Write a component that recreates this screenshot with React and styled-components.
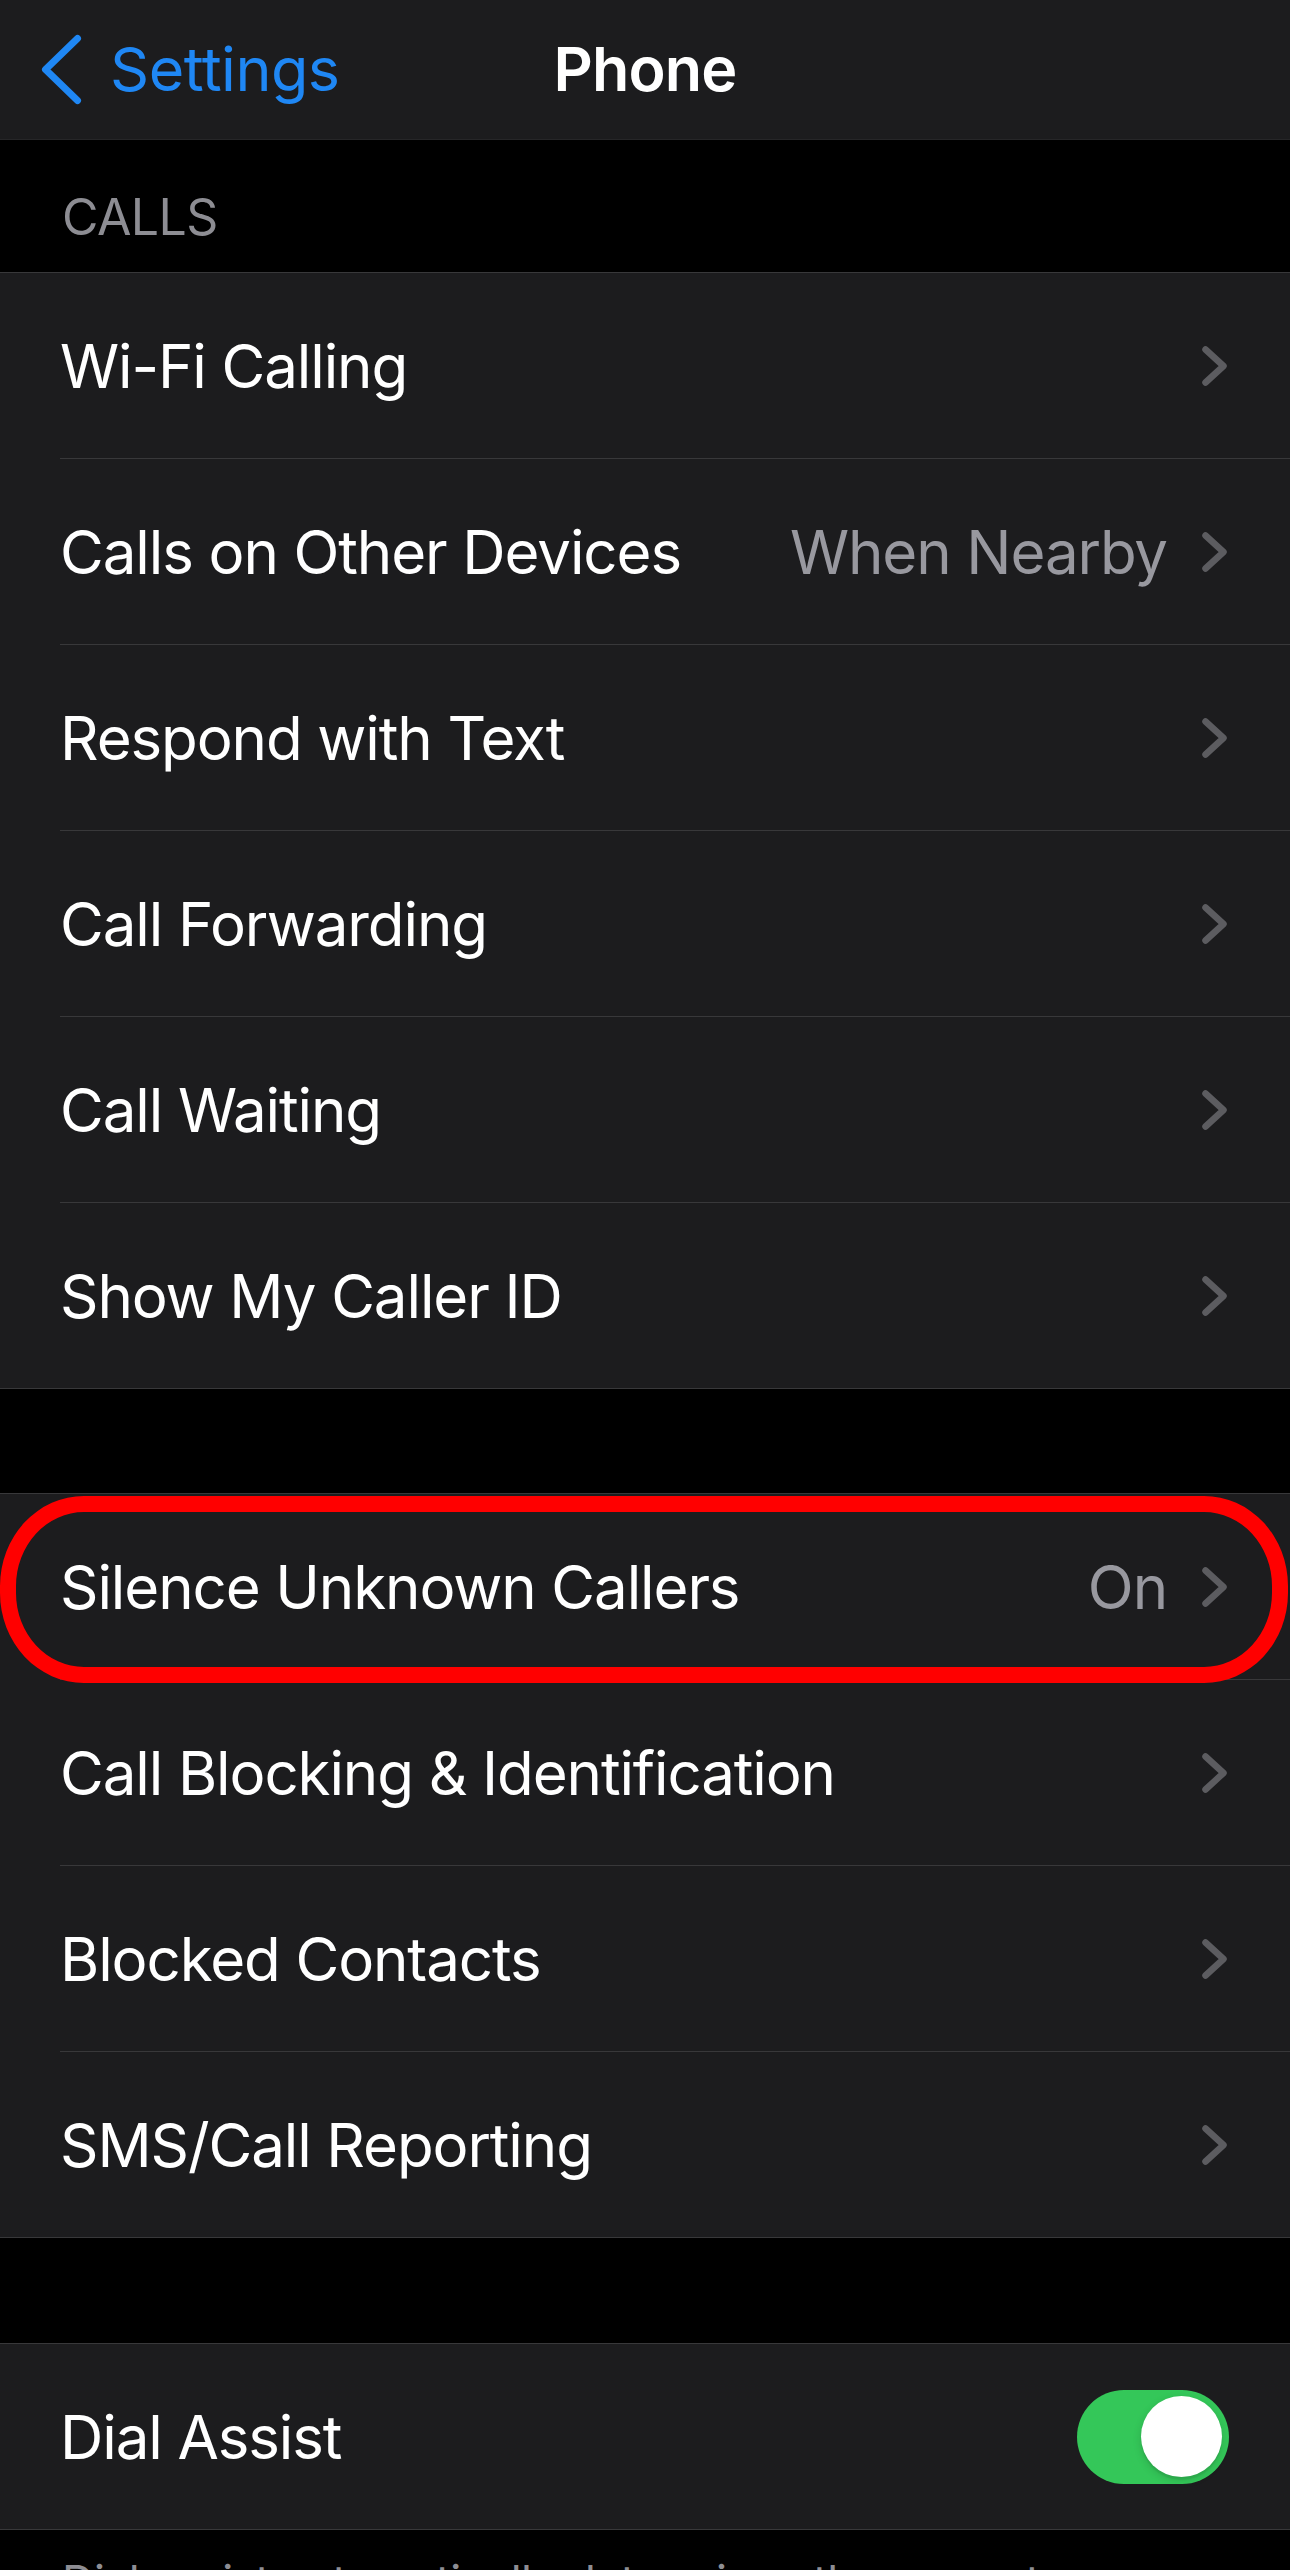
import React from 'react';
import styled, { createGlobalStyle } from 'styled-components';

const GlobalStyle = createGlobalStyle`
  html, body { margin: 0; padding: 0; background: #000; }
  body {
    font-family: Inter, "Noto Sans", "Liberation Sans", sans-serif;
    -webkit-font-smoothing: antialiased;
  }
`;

const Screen = styled.div`
  width: 1290px;
  min-height: 2570px;
  background: #000;
  overflow: hidden;
`;

const NavBar = styled.header`
  height: 139px;
  background: #1c1c1e;
  border-bottom: 1px solid #262628;
  display: grid;
  grid-template-columns: 1fr auto 1fr;
  align-items: center;
  padding: 0 38px;
`;

const BackButton = styled.div`
  display: flex;
  align-items: center;
  gap: 28px;
  color: #1f87f4;
  font-size: 61px;
  line-height: 1;
  letter-spacing: -0.5px;
`;

const Title = styled.h1`
  margin: 0;
  color: #fff;
  font-size: 61px;
  font-weight: 600;
  line-height: 1;
  letter-spacing: -0.8px;
`;

const SectionHeader = styled.div`
  padding: 52px 62px 30px;
  font-size: 50px;
  line-height: 1;
  color: #8d8d93;
  text-transform: uppercase;
  letter-spacing: -0.6px;
`;

const Group = styled.section`
  position: relative;
  background: #1c1c1e;
  border-top: 1px solid #38383a;
  border-bottom: 1px solid #38383a;
  margin-top: ${(p) => p.$gap || 0}px;
`;

const Row = styled.div`
  position: relative;
  display: flex;
  padding-left: 60px;
  &:last-child > div {
    border-bottom: none;
  }
`;

const RowInner = styled.div`
  flex: 1;
  display: flex;
  align-items: center;
  height: 185px;
  padding-right: 61px;
  border-bottom: 1px solid #38383a;
`;

const Label = styled.span`
  flex: 1;
  color: #fff;
  font-size: 60px;
  line-height: 1;
  white-space: nowrap;
  letter-spacing: -1.1px;
`;

const Value = styled.span`
  color: #98989f;
  font-size: 60px;
  line-height: 1;
  margin-right: 34px;
  letter-spacing: -1.1px;
`;

const Toggle = styled.div`
  width: 152px;
  height: 94px;
  border-radius: 47px;
  background: #34c759;
  display: flex;
  align-items: center;
  justify-content: flex-end;
  padding: 0 7px;
  box-sizing: border-box;
`;

const Knob = styled.div`
  width: 81px;
  height: 81px;
  border-radius: 50%;
  background: #fff;
  box-shadow: 0 3px 8px rgba(0, 0, 0, 0.15), 0 3px 1px rgba(0, 0, 0, 0.06);
`;

const Highlight = styled.span`
  position: absolute;
  top: 2px;
  bottom: -3px;
  left: 0;
  right: 2px;
  border: 16px solid #ff0000;
  border-radius: 84px / 90px;
  pointer-events: none;
  z-index: 2;
`;

const Footer = styled.div`
  padding: 24px 62px 0;
  font-size: 45px;
  line-height: 1.25;
  color: #8d8d93;
  letter-spacing: -0.6px;
`;

const BackChevron = () => (
  <svg width="44" height="77" viewBox="0 0 44 77" fill="none">
    <path
      d="M39.5 7.5 L7.5 38.5 L39.5 69.5"
      stroke="#1f87f4"
      strokeWidth="7"
      strokeLinecap="round"
      strokeLinejoin="round"
    />
  </svg>
);

const Chevron = () => (
  <svg width="28" height="46" viewBox="0 0 28 46" fill="none">
    <path
      d="M4.5 6.5 L22.5 23 L4.5 39.5"
      stroke="#5c5c60"
      strokeWidth="6.5"
      strokeLinecap="round"
      strokeLinejoin="round"
    />
  </svg>
);

const NavRow = ({ label, value, highlight }) => (
  <Row>
    <RowInner>
      <Label>{label}</Label>
      {value && <Value>{value}</Value>}
      <Chevron />
    </RowInner>
    {highlight && <Highlight />}
  </Row>
);

const callRows = [
  { label: 'Wi-Fi Calling' },
  { label: 'Calls on Other Devices', value: 'When Nearby' },
  { label: 'Respond with Text' },
  { label: 'Call Forwarding' },
  { label: 'Call Waiting' },
  { label: 'Show My Caller ID' },
];

const blockRows = [
  { label: 'Silence Unknown Callers', value: 'On', highlight: true },
  { label: 'Call Blocking & Identification' },
  { label: 'Blocked Contacts' },
  { label: 'SMS/Call Reporting' },
];

export default function App() {
  return (
    <>
      <GlobalStyle />
      <Screen>
        <NavBar>
          <BackButton>
            <BackChevron />
            <span>Settings</span>
          </BackButton>
          <Title>Phone</Title>
          <div />
        </NavBar>

        <SectionHeader>Calls</SectionHeader>
        <Group>
          {callRows.map((r) => (
            <NavRow key={r.label} {...r} />
          ))}
        </Group>

        <Group $gap={104}>
          {blockRows.map((r) => (
            <NavRow key={r.label} {...r} />
          ))}
        </Group>

        <Group $gap={105}>
          <Row>
            <RowInner>
              <Label>Dial Assist</Label>
              <Toggle>
                <Knob />
              </Toggle>
            </RowInner>
          </Row>
        </Group>

        <Footer>
          Dial assist automatically determines the correct international or local prefix when dialing.
        </Footer>
      </Screen>
    </>
  );
}
